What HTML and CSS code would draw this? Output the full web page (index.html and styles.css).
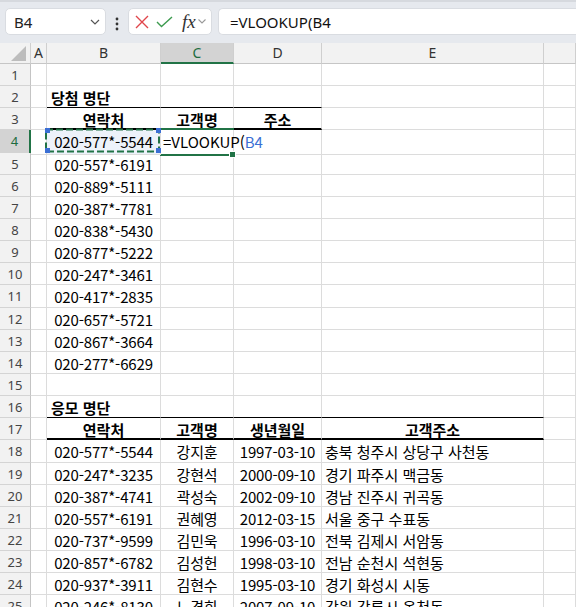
FILE: index.html
```html
<!DOCTYPE html>
<html lang="ko">
<head>
    <meta charset="UTF-8">
    <title>VLOOKUP</title>
    <link rel="stylesheet" href="styles.css">
</head>
<body>
<div class="toolbar">
    <div class="namebox">
        <span>B4</span>
        <svg class="chev" width="10" height="6" viewBox="0 0 10 6"><path d="M1 1l4 4 4-4" fill="none" stroke="#555" stroke-width="1.2"/></svg>
    </div>
    <svg class="dots" width="4" height="14" viewBox="0 0 4 14"><circle cx="2" cy="2" r="1.4"/><circle cx="2" cy="7" r="1.4"/><circle cx="2" cy="12" r="1.4"/></svg>
    <div class="fxbox">
        <svg width="14" height="14" viewBox="0 0 14 14"><path d="M1 1l12 12M13 1L1 13" stroke="#e0464b" stroke-width="1.4" fill="none"/></svg>
        <svg width="17" height="12" viewBox="0 0 17 12"><path d="M1 6l4.5 4.5L16 1" stroke="#3d9b4f" stroke-width="1.4" fill="none"/></svg>
        <span class="fx">fx</span>
        <svg width="8" height="5" viewBox="0 0 8 5"><path d="M0.5 0.5l3.5 3.5 3.5-3.5" fill="none" stroke="#999" stroke-width="1.1"/></svg>
    </div>
    <div class="formula">=VLOOKUP(B4</div>
</div>

<div class="sheet">
    <div class="row colhead">
        <div class="corner"><svg width="16" height="15" viewBox="0 0 16 15"><polygon points="15,0 15,15 0,15" fill="#bdbdbd"/></svg></div>
        <div>A</div><div>B</div><div class="sel">C</div><div>D</div><div>E</div><div></div>
    </div>

    <div class="row"><div class="rh">1</div><div></div><div></div><div></div><div></div><div></div><div></div></div>
    <div class="row"><div class="rh">2</div><div></div><div class="title line">당첨 명단</div><div class="line"></div><div class="line"></div><div></div><div></div></div>
    <div class="row"><div class="rh">3</div><div></div><div class="th">연락처</div><div class="th">고객명</div><div class="th">주소</div><div></div><div></div></div>
    <div class="row"><div class="rh cur">4</div><div></div>
        <div class="ctr ref">020-577*-5544<svg class="ants" width="116" height="25" viewBox="0 0 116 25"><rect x="1" y="1.5" width="113" height="22" fill="none" stroke="#217346" stroke-width="2" stroke-dasharray="7 3"/><rect x="0" y="0" width="5" height="5" fill="#3b6fd4"/><rect x="111" y="0" width="5" height="5" fill="#3b6fd4"/><rect x="0" y="20" width="5" height="5" fill="#3b6fd4"/><rect x="111" y="20" width="5" height="5" fill="#3b6fd4"/></svg></div>
        <div class="edit">=VLOOKUP(<span class="blue">B4</span><span class="handle"></span></div><div></div><div></div><div></div></div>
    <div class="row"><div class="rh">5</div><div></div><div class="ctr">020-557*-6191</div><div></div><div></div><div></div><div></div></div>
    <div class="row"><div class="rh">6</div><div></div><div class="ctr">020-889*-5111</div><div></div><div></div><div></div><div></div></div>
    <div class="row"><div class="rh">7</div><div></div><div class="ctr">020-387*-7781</div><div></div><div></div><div></div><div></div></div>
    <div class="row"><div class="rh">8</div><div></div><div class="ctr">020-838*-5430</div><div></div><div></div><div></div><div></div></div>
    <div class="row"><div class="rh">9</div><div></div><div class="ctr">020-877*-5222</div><div></div><div></div><div></div><div></div></div>
    <div class="row"><div class="rh">10</div><div></div><div class="ctr">020-247*-3461</div><div></div><div></div><div></div><div></div></div>
    <div class="row"><div class="rh">11</div><div></div><div class="ctr">020-417*-2835</div><div></div><div></div><div></div><div></div></div>
    <div class="row"><div class="rh">12</div><div></div><div class="ctr">020-657*-5721</div><div></div><div></div><div></div><div></div></div>
    <div class="row"><div class="rh">13</div><div></div><div class="ctr">020-867*-3664</div><div></div><div></div><div></div><div></div></div>
    <div class="row"><div class="rh">14</div><div></div><div class="ctr">020-277*-6629</div><div></div><div></div><div></div><div></div></div>
    <div class="row"><div class="rh">15</div><div></div><div></div><div></div><div></div><div></div><div></div></div>
    <div class="row"><div class="rh">16</div><div></div><div class="title line">응모 명단</div><div class="line"></div><div class="line"></div><div class="line"></div><div></div></div>
    <div class="row"><div class="rh">17</div><div></div><div class="th">연락처</div><div class="th">고객명</div><div class="th">생년월일</div><div class="th">고객주소</div><div></div></div>
    <div class="row"><div class="rh">18</div><div></div><div class="ctr">020-577*-5544</div><div class="ctr">강지훈</div><div class="ctr">1997-03-10</div><div class="addr">충북 청주시 상당구 사천동</div><div></div></div>
    <div class="row"><div class="rh">19</div><div></div><div class="ctr">020-247*-3235</div><div class="ctr">강현석</div><div class="ctr">2000-09-10</div><div class="addr">경기 파주시 맥금동</div><div></div></div>
    <div class="row"><div class="rh">20</div><div></div><div class="ctr">020-387*-4741</div><div class="ctr">곽성숙</div><div class="ctr">2002-09-10</div><div class="addr">경남 진주시 귀곡동</div><div></div></div>
    <div class="row"><div class="rh">21</div><div></div><div class="ctr">020-557*-6191</div><div class="ctr">권혜영</div><div class="ctr">2012-03-15</div><div class="addr">서울 중구 수표동</div><div></div></div>
    <div class="row"><div class="rh">22</div><div></div><div class="ctr">020-737*-9599</div><div class="ctr">김민욱</div><div class="ctr">1996-03-10</div><div class="addr">전북 김제시 서암동</div><div></div></div>
    <div class="row"><div class="rh">23</div><div></div><div class="ctr">020-857*-6782</div><div class="ctr">김성헌</div><div class="ctr">1998-03-10</div><div class="addr">전남 순천시 석현동</div><div></div></div>
    <div class="row"><div class="rh">24</div><div></div><div class="ctr">020-937*-3911</div><div class="ctr">김현수</div><div class="ctr">1995-03-10</div><div class="addr">경기 화성시 시동</div><div></div></div>
    <div class="row"><div class="rh">25</div><div></div><div class="ctr">020-246*-8130</div><div class="ctr">노경희</div><div class="ctr">2007-09-10</div><div class="addr">강원 강릉시 옥천동</div><div></div></div>
</div>
</body>
</html>
```

FILE: styles.css
```css
html, body {
    margin: 0;
    overflow: hidden;
}
body {
    font-family: "Noto Sans CJK KR", sans-serif;
    color: #000;
    background: #fff;
}

/* formula bar area */
.toolbar {
    height: 43px;
    box-sizing: border-box;
    background: #e6e9ee;
    border-top: 2px solid #d6d9de;
    display: flex;
    align-items: flex-start;
    padding: 6px 0 0 5px;
}
.namebox, .fxbox, .formula {
    height: 27px;
    box-sizing: border-box;
    background: #fff;
    border: 1px solid #d9dce1;
    border-radius: 5px;
    display: flex;
    align-items: center;
}
.namebox {
    width: 101px;
    padding: 0 5px 0 8px;
    justify-content: space-between;
    font-family: "Noto Sans", sans-serif;
    font-size: 15px;
    color: #222;
}
.dots {
    fill: #333;
    margin: 9px 9px 0 9px;
}
.fxbox {
    width: 84px;
    padding: 0 0 0 6px;
    gap: 7px;
}
.fx {
    font-family: "Liberation Serif", serif;
    font-style: italic;
    font-size: 19px;
    color: #333;
    line-height: 1;
    margin-left: 2px;
    margin-right: -5px;
}
.formula {
    flex: 1;
    margin-left: 6px;
    border-right: none;
    border-radius: 5px 0 0 5px;
    padding-left: 11px;
    font-family: "Noto Sans", sans-serif;
    font-size: 15px;
    color: #111;
}

/* grid */
.row {
    display: grid;
    grid-template-columns: 31px 16px 114px 73px 88px 222px 1fr;
    height: 22.15px;
}
.row > div {
    box-sizing: border-box;
    border-right: 1px solid #dcdcdc;
    border-bottom: 1px solid #dcdcdc;
    white-space: nowrap;
    overflow: hidden;
    font-size: 15px;
    line-height: 24px;
    position: relative;
}
.colhead {
    height: 21px;
}
.colhead > div {
    background: #f2f2f2;
    text-align: center;
    font-family: "Noto Sans", sans-serif;
    font-size: 14px;
    line-height: 20px;
    color: #333;
    border-right-color: #cfcfcf;
    border-bottom-color: #c6c6c6;
}
.colhead .sel {
    background: #d3d3d3;
    color: #1c6c40;
    border-bottom: 2px solid #217346;
}
.corner svg {
    position: absolute;
    right: 3px;
    bottom: 2px;
}
.row > .rh {
    background: #f2f2f2;
    text-align: center;
    font-family: "Noto Sans", sans-serif;
    font-size: 13px;
    line-height: 23px;
    color: #444;
    border-right-color: #c4c4c4;
    border-bottom-color: #d4d4d4;
}
.row > .rh.cur {
    background: #d3d3d3;
    color: #1c6c40;
    border-right: 2px solid #217346;
}

.ctr {
    text-align: center;
    letter-spacing: -0.15px;
}
.title {
    font-weight: bold;
    padding-left: 4px;
}
.row > .line {
    border-bottom-color: #000;
}
.row > .th {
    font-weight: bold;
    text-align: center;
    border-bottom: 2px solid #000;
}
.addr {
    padding-left: 3px;
}

/* referenced cell and cell being edited */
.row > .ref {
    background: #edf2fa;
    overflow: visible;
    z-index: 2;
}
.ants {
    position: absolute;
    left: -2px;
    top: -2px;
}
.row > .edit {
    overflow: visible;
    padding-left: 2px;
    z-index: 1;
}
.edit::before {
    content: "";
    position: absolute;
    left: -1px;
    top: -2px;
    right: -1px;
    bottom: -2px;
    border-top: 2px solid #217346;
    border-bottom: 2px solid #217346;
}
.blue {
    color: #3b6fd4;
}
.handle {
    position: absolute;
    right: -3px;
    bottom: -4px;
    width: 5px;
    height: 5px;
    background: #217346;
    border: 1px solid #fff;
}
```
